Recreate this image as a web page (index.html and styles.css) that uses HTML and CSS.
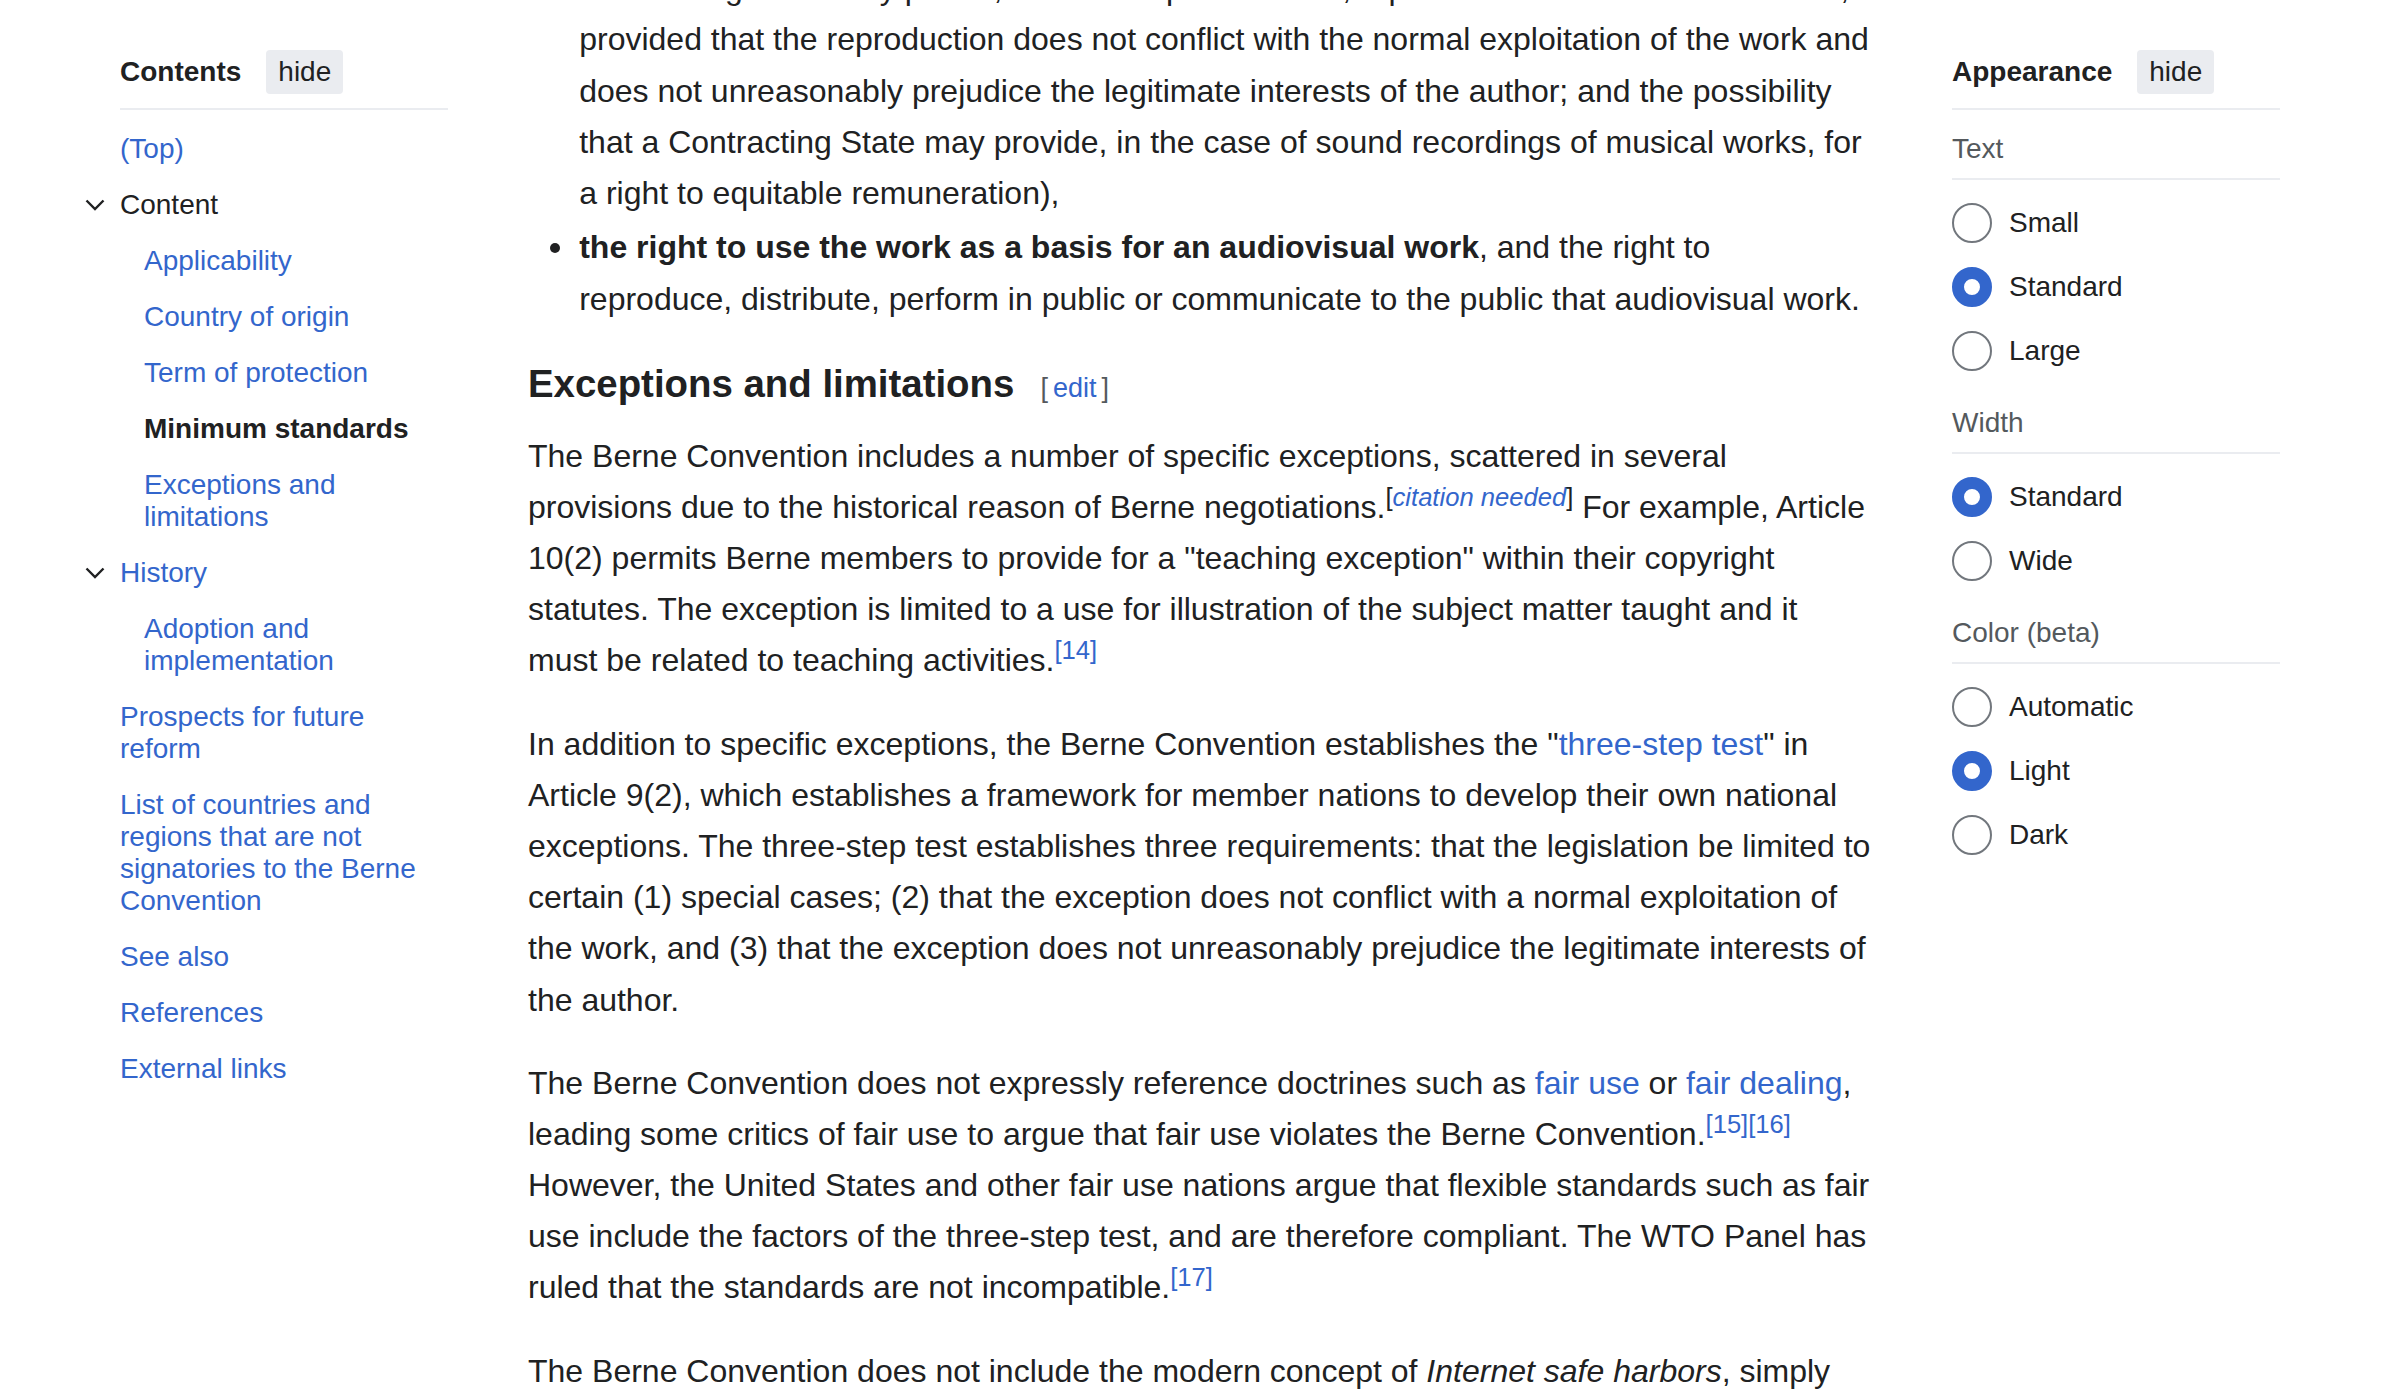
FILE: index.html
```html
<!DOCTYPE html>
<html lang="en">
<head>
<meta charset="utf-8">
<title>Berne Convention</title>
<link rel="stylesheet" href="styles.css">
</head>
<body>
<div class="page">
  <nav class="toc">
    <div class="panel-header">
      <h2 class="panel-title">Contents</h2>
      <button class="hide-btn" type="button">hide</button>
    </div>
    <ul class="toc-list">
      <li><a class="toc-link" href="#">(Top)</a></li>
      <li>
        <div class="toc-row">
          <svg class="toc-toggle" viewBox="0 0 20 12" aria-hidden="true"><path d="M1.5 1.5 L10 10 L18.5 1.5" /></svg>
          <span class="toc-link toc-parent">Content</span>
        </div>
        <ul class="toc-sublist">
          <li><a class="toc-link" href="#">Applicability</a></li>
          <li><a class="toc-link" href="#">Country of origin</a></li>
          <li><a class="toc-link" href="#">Term of protection</a></li>
          <li><span class="toc-link toc-active">Minimum standards</span></li>
          <li><a class="toc-link" href="#">Exceptions and limitations</a></li>
        </ul>
      </li>
      <li>
        <div class="toc-row">
          <svg class="toc-toggle" viewBox="0 0 20 12" aria-hidden="true"><path d="M1.5 1.5 L10 10 L18.5 1.5" /></svg>
          <a class="toc-link" href="#">History</a>
        </div>
        <ul class="toc-sublist">
          <li><a class="toc-link" href="#">Adoption and implementation</a></li>
        </ul>
      </li>
      <li><a class="toc-link" href="#">Prospects for future reform</a></li>
      <li><a class="toc-link" href="#">List of countries and regions that are not signatories to the Berne Convention</a></li>
      <li><a class="toc-link" href="#">See also</a></li>
      <li><a class="toc-link" href="#">References</a></li>
      <li><a class="toc-link" href="#">External links</a></li>
    </ul>
  </nav>

  <main class="content">
    <ul class="rights">
      <li>the right to make reproductions in any manner or form (with the possibility that a Contracting State may permit, in certain special cases, reproduction without authorization, provided that the reproduction does not conflict with the normal exploitation of the work and does not unreasonably prejudice the legitimate interests of the author; and the possibility that a Contracting State may provide, in the case of sound recordings of musical works, for a right to equitable remuneration),</li>
      <li><b>the right to use the work as a basis for an audiovisual work</b>, and the right to reproduce, distribute, perform in public or communicate to the public that audiovisual work.</li>
    </ul>

    <h3 class="section-heading">Exceptions and limitations<span class="editsection"><span class="bracket">[</span><a href="#">edit</a><span class="bracket">]</span></span></h3>

    <p>The Berne Convention includes a number of specific exceptions, scattered in several provisions due to the historical reason of Berne negotiations.<sup class="cn">[<i><a href="#">citation needed</a></i>]</sup> For example, Article 10(2) permits Berne members to provide for a "teaching exception" within their copyright statutes. The exception is limited to a use for illustration of the subject matter taught and it must be related to teaching activities.<sup class="ref"><a href="#">[14]</a></sup></p>

    <p>In addition to specific exceptions, the Berne Convention establishes the "<a href="#">three-step test</a>" in Article 9(2), which establishes a framework for member nations to develop their own national exceptions. The three-step test establishes three requirements: that the legislation be limited to certain (1) special cases; (2) that the exception does not conflict with a normal exploitation of the work, and (3) that the exception does not unreasonably prejudice the legitimate interests of the author.</p>

    <p>The Berne Convention does not expressly reference doctrines such as <a href="#">fair use</a> or <a href="#">fair dealing</a>, leading some critics of fair use to argue that fair use violates the Berne Convention.<sup class="ref"><a href="#">[15]</a></sup><sup class="ref"><a href="#">[16]</a></sup> However, the United States and other fair use nations argue that flexible standards such as fair use include the factors of the three-step test, and are therefore compliant. The WTO Panel has ruled that the standards are not incompatible.<sup class="ref"><a href="#">[17]</a></sup></p>

    <p>The Berne Convention does not include the modern concept of <i>Internet safe harbors</i>, simply</p>
  </main>

  <aside class="appearance">
    <div class="panel-header">
      <h2 class="panel-title">Appearance</h2>
      <button class="hide-btn" type="button">hide</button>
    </div>
    <div class="appearance-body">
      <section class="appearance-section">
        <div class="section-label">Text</div>
        <div class="radio-list">
          <label class="radio-row"><input class="radio" type="radio" name="text"><span>Small</span></label>
          <label class="radio-row"><input class="radio" type="radio" name="text" checked><span>Standard</span></label>
          <label class="radio-row"><input class="radio" type="radio" name="text"><span>Large</span></label>
        </div>
      </section>
      <section class="appearance-section">
        <div class="section-label">Width</div>
        <div class="radio-list">
          <label class="radio-row"><input class="radio" type="radio" name="width" checked><span>Standard</span></label>
          <label class="radio-row"><input class="radio" type="radio" name="width"><span>Wide</span></label>
        </div>
      </section>
      <section class="appearance-section">
        <div class="section-label">Color (beta)</div>
        <div class="radio-list">
          <label class="radio-row"><input class="radio" type="radio" name="color"><span>Automatic</span></label>
          <label class="radio-row"><input class="radio" type="radio" name="color" checked><span>Light</span></label>
          <label class="radio-row"><input class="radio" type="radio" name="color"><span>Dark</span></label>
        </div>
      </section>
    </div>
  </aside>
</div>
</body>
</html>
```

FILE: styles.css
```css
* { box-sizing: border-box; }

html, body {
  margin: 0;
  padding: 0;
  background: #ffffff;
}

body {
  font-family: "Liberation Sans", Arial, Helvetica, sans-serif;
  color: #202122;
  height: 1398px;
  overflow: hidden;
}

a {
  color: #3366cc;
  text-decoration: none;
}

.page {
  display: flex;
  align-items: flex-start;
  gap: 80px;
  padding: 0 120px;
}

/* ---------- side panels ---------- */
.toc,
.appearance {
  width: 328px;
  flex: none;
  font-size: 28px;
  padding-top: 2px;
}

.panel-header {
  display: flex;
  align-items: center;
  gap: 25px;
  padding: 48px 0 14px;
  border-bottom: 2px solid #eaecf0;
}

.panel-title {
  margin: 0;
  font-size: 28px;
  font-weight: bold;
  line-height: 32px;
}

.hide-btn {
  font-family: inherit;
  font-size: 28px;
  line-height: 32px;
  height: 44px;
  padding: 0 12px;
  border: 0;
  border-radius: 4px;
  background: #eaecf0;
  color: #202122;
}

/* ---------- table of contents ---------- */
.toc-list,
.toc-sublist {
  list-style: none;
  margin: 0;
  padding: 0;
}

.toc-list {
  padding-top: 11px;
}

.toc-sublist {
  padding-left: 24px;
}

.toc-link {
  display: block;
  padding: 12px 0;
  line-height: 32px;
}

.toc-row {
  display: flex;
  align-items: center;
  margin-left: -35px;
}

.toc-toggle {
  flex: none;
  width: 20px;
  height: 12px;
  margin-right: 15px;
}

.toc-toggle path {
  fill: none;
  stroke: #202122;
  stroke-width: 2.4;
}

.toc-parent {
  color: #202122;
}

.toc-active {
  color: #202122;
  font-weight: bold;
}

/* ---------- article ---------- */
.content {
  width: 1344px;
  flex: none;
  margin-top: -88px;
  font-size: 32px;
  line-height: 1.6;
}

.rights {
  list-style: none;
  margin: 0 0 0 51.2px;
  padding: 0;
}

.rights li {
  position: relative;
  margin-bottom: 3.2px;
}

.rights li::before {
  content: "";
  position: absolute;
  left: -29px;
  top: 21px;
  width: 10px;
  height: 10px;
  border-radius: 50%;
  background: #202122;
}

.section-heading {
  margin: 28.5px 0 0;
  font-size: 38.4px;
  line-height: 1.6;
  font-weight: bold;
  color: #202122;
}

.editsection {
  font-size: 27px;
  font-weight: normal;
  margin-left: 21px;
}

.bracket {
  color: #54595d;
  margin: 0 5px;
}

.content p {
  margin: 16px 0 32px;
}

sup {
  font-size: 80%;
  line-height: 1;
  vertical-align: super;
  white-space: nowrap;
}

/* ---------- appearance ---------- */
.appearance-body {
  display: flex;
  flex-direction: column;
  gap: 36px;
  padding-top: 23px;
}

.section-label {
  line-height: 32px;
  color: #54595d;
  padding-bottom: 13px;
  border-bottom: 2px solid #eaecf0;
}

.radio-list {
  display: flex;
  flex-direction: column;
  gap: 24px;
  padding-top: 23px;
}

.radio-row {
  display: flex;
  align-items: center;
  gap: 17px;
  height: 40px;
  line-height: 32px;
  color: #202122;
}

.radio {
  appearance: none;
  -webkit-appearance: none;
  flex: none;
  width: 40px;
  height: 40px;
  margin: 0;
  border: 2px solid #72777d;
  border-radius: 50%;
  background: #ffffff;
}

.radio:checked {
  border: 12px solid #3366cc;
}
```
